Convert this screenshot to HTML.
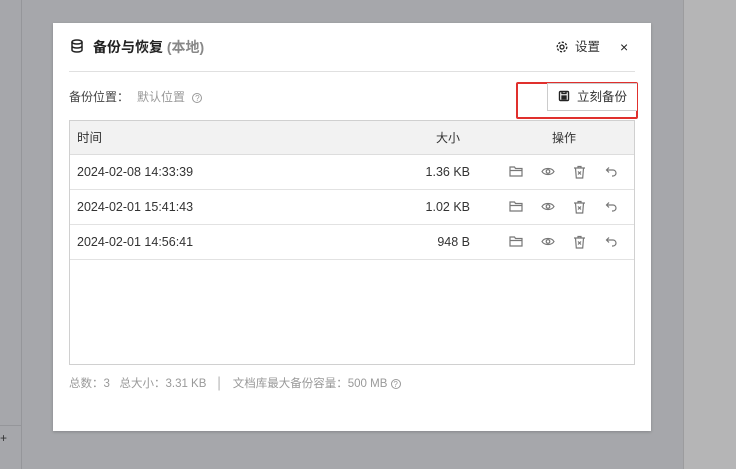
<!DOCTYPE html><html><head><meta charset="utf-8"><style>
*{box-sizing:border-box;margin:0;padding:0}
body{width:736px;height:469px;background:#a6a7ab;position:relative;overflow:hidden;font-family:"Liberation Sans","Noto Sans CJK SC",sans-serif;font-size:12px;color:#333}
.ls{position:absolute;left:0;top:0;width:22px;height:469px;border-right:1px solid #95969a}
.ls .h{position:absolute;left:0;top:425px;width:21px;border-top:1px solid #95969a}
.rs{position:absolute;left:683px;top:0;width:53px;height:469px;background:#b5b5b6;border-left:1px solid #9c9c9e}
.m{position:absolute;left:53px;top:23px;width:598px;height:408px;background:#fff;box-shadow:0 1px 3px rgba(0,0,0,.2)}
.abs{position:absolute;white-space:nowrap;line-height:16px}
.tb{position:absolute;left:16px;top:97px;width:566px;height:245px;border:1px solid #d0d0d0}
.th{height:34px;background:#f2f2f2;border-bottom:1px solid #ddd;position:relative}
.tr{height:35px;border-bottom:1px solid #e2e2e2;position:relative}
.c1{position:absolute;left:7px;top:9px;font-size:12.5px;line-height:16px}
.c2{position:absolute;right:164px;top:9px;font-size:12.5px;line-height:16px}
.ic{position:absolute;top:10px}
</style></head><body>
<div class="ls"><div class="h"></div><span class="abs" style="left:0;top:430px;font-size:12px">+</span></div>
<div class="rs"></div>
<div class="m">
<svg class="abs" style="left:17px;top:16px" width="14" height="14" viewBox="0 0 14 14" fill="none" stroke="#222" stroke-width="1.5"><ellipse cx="7" cy="3" rx="5" ry="2"/><path d="M2 3v8c0 1.1 2.2 2 5 2s5-.9 5-2V3M2 7c0 1.1 2.2 2 5 2s5-.9 5-2"/></svg>
<span class="abs" style="left:40px;top:16px;font-size:14px;font-weight:bold;color:#222">备份与恢复 <span style="color:#888">(本地)</span></span>
<svg class="abs" style="left:503px;top:18px" width="12" height="12" viewBox="0 0 12 12" fill="none" stroke="#222" stroke-width="1.3"><circle cx="6" cy="6" r="2"/><circle cx="6" cy="6" r="4.8" stroke-dasharray="2.2 1.5"/></svg>
<span class="abs" style="left:522px;top:16px;font-size:12.5px">设置</span>
<span class="abs" style="left:567px;top:16px;font-size:14px;color:#222">×</span>
<div class="abs" style="left:16px;top:48px;width:566px;border-top:1px solid #e0e0e0"></div>
<span class="abs" style="left:16px;top:66px;color:#444">备份位置：</span>
<span class="abs" style="left:84px;top:66px;color:#999">默认位置 <span style="border:1px solid #999;border-radius:50%;display:inline-block;width:10px;height:10px;font-size:8px;line-height:9px;text-align:center;margin-left:4px">?</span></span>
<div class="abs" style="left:463px;top:59px;width:122px;height:37px;border:2px solid #e0302d;border-radius:2px"></div>
<div class="abs" style="left:494px;top:60px;width:90px;height:28px;border:1px solid #ccc;border-right:none;background:#fff"></div>
<svg class="abs" style="left:505px;top:67px" width="12" height="12" viewBox="0 0 12 12" fill="none" stroke="#222" stroke-width="1.4"><rect x="1.5" y="1.5" width="9" height="9" rx="1"/><rect x="4" y="6" width="4" height="3" fill="#222"/><path d="M4 1.5v2h4v-2"/></svg>
<span class="abs" style="left:524px;top:66px;font-size:12.5px">立刻备份</span>
<div class="tb">
<div class="th"><span class="c1">时间</span><span class="abs" style="left:366px;top:9px">大小</span><span class="abs" style="left:482px;top:9px">操作</span></div>
<div class="tr"><span class="c1">2024-02-08 14:33:39</span><span class="c2">1.36 KB</span>ICONS</div>
<div class="tr"><span class="c1">2024-02-01 15:41:43</span><span class="c2">1.02 KB</span>ICONS</div>
<div class="tr"><span class="c1">2024-02-01 14:56:41</span><span class="c2">948 B</span>ICONS</div>
</div>
<span class="abs" style="left:16px;top:353px;color:#999;font-size:11.5px">总数：3&nbsp;&nbsp;&nbsp;总大小：3.31 KB&nbsp;&nbsp;&nbsp;│&nbsp;&nbsp;&nbsp;文档库最大备份容量：500 MB <span style="border:1px solid #999;border-radius:50%;display:inline-block;width:10px;height:10px;font-size:8px;line-height:9px;text-align:center">?</span></span>
</div>
<script>
var ic='<svg class="ic" style="left:439px" width="15" height="13" viewBox="0 0 15 13" fill="none" stroke="#777" stroke-width="1.2"><path d="M1 2h4.5l1 1.5H13V11H1z M1 5.5h12"/></svg><svg class="ic" style="left:471px" width="14" height="13" viewBox="0 0 14 13" fill="none" stroke="#777" stroke-width="1.2"><path d="M1 6.5c2.2-4 9.8-4 12 0c-2.2 4-9.8 4-12 0z"/><circle cx="7" cy="6.5" r="1.8"/></svg><svg class="ic" style="left:503px" width="13" height="14" viewBox="0 0 13 14" fill="none" stroke="#777" stroke-width="1.2"><path d="M1 3h11M5 3V1.5h3V3M2.5 3l.8 10h6.4l.8-10M5 6.5l3 3M8 6.5l-3 3"/></svg><svg class="ic" style="left:535px" width="13" height="13" viewBox="0 0 13 13" fill="none" stroke="#777" stroke-width="1.2"><path d="M4 2.5L1.5 5 4 7.5M1.5 5h6.5a3 3 0 010 6H7"/></svg>';
document.body.innerHTML=document.body.innerHTML.replace(/ICONS/g,ic);
</script>
</body></html>
